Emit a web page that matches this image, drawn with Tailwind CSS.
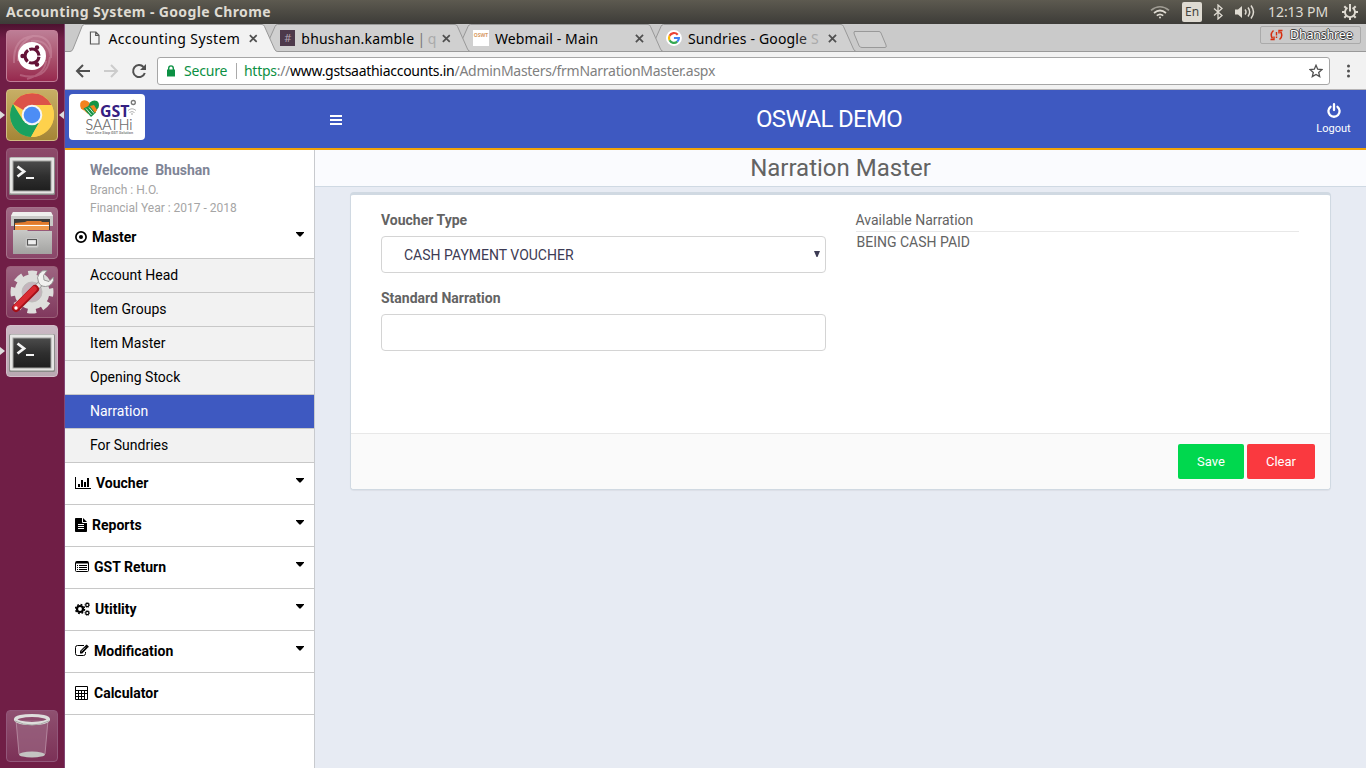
<!DOCTYPE html>
<html lang="en">
<head>
<meta charset="utf-8">
<title>Accounting System</title>
<script src="https://cdn.jsdelivr.net/npm/@tailwindcss/browser@4"></script>
</head>
<body class="w-[1366px] h-[768px] overflow-hidden flex flex-col font-['Roboto',sans-serif] text-sm bg-[#e7ebf3]">

<!-- shared symbols -->
<svg width="0" height="0" class="absolute">
  <defs>
    <linearGradient id="metal" x1="0" y1="0" x2="0" y2="1"><stop offset="0" stop-color="#c9c9c7"/><stop offset="1" stop-color="#a3a3a1"/></linearGradient>
    <linearGradient id="screen" x1="0" y1="0" x2="0" y2="1"><stop offset="0" stop-color="#4b4b4b"/><stop offset=".5" stop-color="#2f2f2f"/><stop offset="1" stop-color="#1f1f1f"/></linearGradient>
    <symbol id="caret" viewBox="0 0 8 5"><path d="M0 0h8v.8L4.6 4.5H3.4L0 .8z" fill="#000"/></symbol>
    <symbol id="close" viewBox="0 0 9 9"><path d="M.9.9l7.2 7.2M8.1.9L.9 8.1" stroke="#505050" stroke-width="1.8" fill="none"/></symbol>
    <symbol id="terminal" viewBox="0 0 52 52">
      <rect x="3" y="9" width="46" height="38" rx="1.5" fill="#8b8b89"/><rect x="4" y="9.500" width="44" height="36" rx="1" fill="#e6e6e4"/>
      <rect x="6.500" y="12.500" width="39" height="31" fill="#a2a2a0"/><rect x="7.500" y="13.500" width="37" height="29" fill="url(#screen)"/>
      <path d="M11.500 18.500l6.500 5-6.500 5" fill="none" stroke="#f4f4f4" stroke-width="2.800"/><path d="M20 30h8" stroke="#f4f4f4" stroke-width="2"/>
    </symbol>
  </defs>
</svg>

<!-- desktop panel -->
<header class="h-6 shrink-0 flex items-center justify-between pl-[6px] pr-[8px] bg-linear-to-b from-[#5d5a50] to-[#3d3c38] font-['Noto_Sans',sans-serif]">
  <div class="text-[14px] font-bold tracking-[0.36px] text-[#dfdbd2] whitespace-nowrap">Accounting System - Google Chrome</div>
  <div class="flex items-center text-[#dfdbd2]">
    <svg width="20" height="16" viewBox="0 0 20 16" fill="none" stroke="#dfdbd2" stroke-width="1.700"><path d="M1 6.300Q10-.8 19 6.300" stroke-opacity=".55"/><path d="M4 9Q10 4 16 9"/><path d="M6.800 11.700Q10 9 13.200 11.700"/><circle cx="10" cy="13.600" r="1" fill="#dfdbd2" stroke="none"/></svg>
    <div class="ml-3 w-5 h-5 rounded-[2px] bg-[#dfdbd2] text-[#45433d] text-[12px] leading-[20px] text-center">En</div>
    <svg class="ml-[11px]" width="10" height="16" viewBox="0 0 10 16" fill="none" stroke="#dfdbd2" stroke-width="1.300"><path d="M1 4.500l8 7-4 3.500V1l4 3.500-8 7"/></svg>
    <svg class="ml-[12px]" width="20" height="16" viewBox="0 0 20 16" fill="none" stroke="#dfdbd2" stroke-width="1.500"><path d="M0 5.500h3L7 2v12l-4-3.500H0z" fill="#dfdbd2" stroke="none"/><path d="M10 5.500q2 2.500 0 5M13 3.500q3.400 4.500 0 9M16 1.500q5 6.500 0 13"/></svg>
    <div class="ml-[13px] w-[62px] text-[14px] tracking-[-0.05px] whitespace-nowrap">12:13 PM</div>
    <svg class="ml-[12px]" width="16" height="16" viewBox="0 0 16 16" fill="none" stroke="#dfdbd2"><path d="M5.500 3.800a5 5 0 1 0 5 0" stroke-width="1.900"/><path d="M8 0v7.500" stroke-width="2"/><path d="M2.300 2.300l2 2M13.700 2.300l-2 2M0 8h3M16 8h-3M2.300 13.700l2-2M13.700 13.700l-2-2M8 16v-3" stroke-width="2"/></svg>
  </div>
</header>

<div class="flex-1 min-h-0 flex">

  <!-- launcher -->
  <aside class="w-[65px] shrink-0 border-r border-[#824674] bg-linear-to-b from-[#4d1230] via-[#701e46] via-[2%] to-[#701e46] flex flex-col items-start pl-[6px] pt-[6px] pb-[6px] gap-[7px]">
    <div class="w-[52px] h-[52px] rounded-[4px] border border-[#c27d97] overflow-hidden bg-linear-to-b from-[#bd7e96] to-[#97284e]">
      <svg width="50" height="50" viewBox="0 0 50 50" fill="none"><path d="M7 32Q6 7 26 5Q46 4 44 27M13 44Q40 51 43 26M26 5Q10 12 11 30M44 27Q42 8 24 10M20 48Q38 43 39 30" stroke="#dda9bb" stroke-opacity=".35" stroke-width="2"/><circle cx="25" cy="25" r="14" fill="#fff"/><circle cx="25" cy="25" r="7" stroke="#641237" stroke-width="3.200" stroke-dasharray="13.160 1.500" stroke-dashoffset="-.8"/><circle cx="15.500" cy="25" r="2.200" fill="#641237"/><circle cx="30" cy="16.500" r="2.200" fill="#641237"/><circle cx="30" cy="33.500" r="2.200" fill="#641237"/></svg>
    </div>
    <div class="relative w-[52px] h-[52px] rounded-[4px] border border-[#d1bd83] bg-linear-to-b from-[#c7ae65] to-[#a58636]">
      <svg width="50" height="50" viewBox="0 0 50 50"><circle cx="25" cy="25" r="22" fill="#fbd24b"/><path d="M25 25L6 14A22 22 0 0 1 44.500 15H25z" fill="#dc5248"/><path d="M34.200 29L24 47A22 22 0 0 1 6 14L16.500 31z" fill="#1aa15f"/><path d="M25 15h19.500A22 22 0 0 1 24 47l9.500-17z" fill="#fed14c"/><circle cx="25" cy="25" r="10.300" fill="#f5f5f5"/><circle cx="25" cy="25" r="8.300" fill="#4c8df5"/></svg>
      <svg class="absolute -left-[7px] top-[20px]" width="5" height="10" viewBox="0 0 5 10"><path d="M0 1l5 4-5 4z" fill="#ddd"/></svg>
      <svg class="absolute left-[52px] top-[20px]" width="5" height="10" viewBox="0 0 5 10"><path d="M5 1L0 5l5 4z" fill="#ddd"/></svg>
    </div>
    <div class="w-[52px] h-[52px] rounded-[4px] border border-[#955a78] bg-linear-to-b from-[#8d4a6a] to-[#7c3157]"><svg class="-m-px" width="52" height="52"><use href="#terminal"/></svg></div>
    <div class="w-[52px] h-[52px] rounded-[4px] border border-[#a5738b] bg-linear-to-b from-[#a06a85] to-[#8a4669]">
      <svg width="50" height="50" viewBox="0 0 50 50"><path d="M6 4h38l2 4v10H4V8z" fill="#c9c9c7"/><path d="M6 4h38l2 4H4z" fill="#efefed"/><path d="M7 11h36v11H7z" fill="#3c3c3a"/><path d="M8 15l10-1 2-1h14l1 1h7v8H8z" fill="#e07a2d"/><path d="M8 16.500h34V22H8z" fill="#f09a4c"/><path d="M8 17.500h34" stroke="#fff"/><path d="M6 22h14l1 1h24V46H6z" fill="url(#metal)"/><rect x="18.500" y="29.500" width="13" height="10" rx="2" fill="#d5d5d3" stroke="#bbb"/><rect x="20.500" y="31.500" width="9" height="5.500" fill="#eee" stroke="#555" stroke-width="1.200"/></svg>
    </div>
    <div class="w-[52px] h-[52px] rounded-[4px] border border-[#9b6079] bg-linear-to-b from-[#9d6581] to-[#81395e]">
      <svg width="50" height="50" viewBox="0 0 50 50" fill="none"><circle cx="25" cy="25" r="18.500" stroke="#dededc" stroke-width="6" stroke-dasharray="8.500 6.030" stroke-dashoffset="4.250"/><circle cx="25" cy="25" r="13.500" stroke="#dededc" stroke-width="8"/><circle cx="25" cy="25" r="10" fill="#c4b4bc" stroke="#bdbdbb" stroke-width="1"/><path d="M28 22l8-8" stroke="#8f8f8d" stroke-width="6"/><path d="M28 22l8-8" stroke="#e8e8e6" stroke-width="4.500"/><path d="M40 3.500A8 8 0 0 0 31.500 15Q33 19.500 38.500 19.500A8 8 0 0 0 46.500 10L42 14.500 37 13 36.500 8.500z" fill="#f2f2f0" stroke="#8f8f8d" stroke-width=".9"/><path d="M9 41L28 22" stroke="#a51018" stroke-width="8" stroke-linecap="round"/><path d="M9 40L27 22" stroke="#d92c33" stroke-width="5.500" stroke-linecap="round"/><circle cx="9" cy="41" r="1.700" fill="#fff"/></svg>
    </div>
    <div class="relative w-[52px] h-[52px] rounded-[4px] border border-[#d3bdc9] bg-linear-to-b from-[#cbb9c4] to-[#b9a8b2]"><svg class="-m-px" width="52" height="52"><use href="#terminal"/></svg>
      <svg class="absolute -left-[7px] top-[20px]" width="5" height="10" viewBox="0 0 5 10"><path d="M0 1l5 4-5 4z" fill="#ddd"/></svg>
    </div>
    <div class="mt-auto w-[52px] h-[52px] rounded-[4px] border border-[#92577a] bg-linear-to-b from-[#8f5070] to-[#7c3157]">
      <svg width="50" height="50" viewBox="0 0 50 50" fill="none"><path d="M9 9l3 34q13 6 26 0l3-34z" fill="#9a6480" fill-opacity=".7"/><path d="M9 9l3 34M41 9l-3 34" stroke="#bd93a8" stroke-width=".8"/><ellipse cx="25" cy="43.500" rx="13" ry="3" fill="#c4c4c2"/><ellipse cx="25" cy="8.500" rx="16.500" ry="4" stroke="#dededc" stroke-width="3.200"/><path d="M8 10q17 8 34 0" stroke="#a9a9a7" stroke-width="1"/></svg>
    </div>
  </aside>

  <main class="flex-1 min-w-0 flex flex-col">

    <!-- browser tabs -->
    <div class="relative h-7 shrink-0 bg-[#cacaca] flex font-['Noto_Sans',sans-serif] text-[14px] text-black">
      <svg class="absolute inset-0" width="1301" height="28" viewBox="0 0 1301 28" fill="none">
        <path d="M0 27.500H1301" stroke="#999"/>
        <g stroke="#999" fill="#d0d0d0">
          <path d="M590 16l6-13.500q.8-2 2.500-2H776q1.800 0 2.500 2l10 22.500q1 2.500 3 2.500H595z" />
          <path d="M397 16l6-13.500q.8-2 2.500-2H583q1.800 0 2.500 2l10 22.500q1 2.500 3 2.500H402z" />
          <path d="M204 16l6-13.500q.8-2 2.500-2H390q1.800 0 2.500 2l10 22.500q1 2.500 3 2.500H209z" />
          <path d="M0 28.500V27.500H5q2 0 3-2.500L17 2.500q.8-2 2.500-2H197q1.800 0 2.500 2l10 22.500q1 2.500 3 2.500V30H0z" fill="#f2f2f2"/>
          <path d="M789.500 7.500H814q1.500 0 2 1.500l5 12q1 2.500-1 2.500H797q-2 0-2.800-1.500l-5-12q-1-2.500 1-2.500z"/>
        </g>
      </svg>
      <div class="relative w-[193px] pl-6 flex items-center">
        <svg width="12" height="14" viewBox="0 0 12 14" fill="none" stroke="#5a5a5a" stroke-width="1.200"><path d="M1.500.7h5.800L10.500 4v9.300h-9zM7 .7V4.300h3.500"/></svg>
        <div class="ml-2 w-[131px] mt-px tracking-[0.38px] whitespace-nowrap">Accounting System</div>
        <svg class="ml-[10px] mt-px" width="9" height="9"><use href="#close"/></svg>
      </div>
      <div class="relative w-[193px] pl-[22px] flex items-center">
        <div class="w-4 h-4 bg-[#4d394b] text-[#b3a5b2] text-[11px] leading-4 text-center">#</div>
        <div class="ml-[6px] w-[133px] mt-px tracking-[0.2px] whitespace-nowrap">bhushan.kamble<span class="tracking-[-0.5px]"> <span class="text-[#777]">|</span> <span class="text-[#aaa]">q</span></span></div>
        <svg class="ml-[8px] mt-px" width="9" height="9"><use href="#close"/></svg>
      </div>
      <div class="relative w-[193px] pl-[22px] flex items-center">
        <div class="w-4 h-4 bg-white text-[#d79a62] text-[5px] leading-[11px] font-bold text-center">OSWT</div>
        <div class="ml-[6px] w-[133px] mt-px tracking-[0.1px] whitespace-nowrap">Webmail - Main</div>
        <svg class="ml-[8px] mt-px" width="9" height="9"><use href="#close"/></svg>
      </div>
      <div class="relative w-[193px] pl-[22px] flex items-center">
        <svg width="16" height="16" viewBox="0 0 16 16" fill="none" stroke-width="2.200"><circle cx="8" cy="8" r="8" fill="#fff"/><path d="M11.800 4.700A5 5 0 0 0 3.600 5.700" stroke="#ea4335"/><path d="M3.600 5.700a5 5 0 0 0 0 4.600" stroke="#fbbc05"/><path d="M3.600 10.300a5 5 0 0 0 7.700 1.400" stroke="#34a853"/><path d="M11.300 11.700Q13 10.200 13 8H8" stroke="#4285f4"/></svg>
        <div class="ml-[6px] w-[132px] mt-px tracking-[0.15px] whitespace-nowrap">Sundries - Googl<span class="text-[#333]">e</span> <span class="text-[#aaa]">S</span></div>
        <svg class="ml-[9px] mt-px" width="9" height="9"><use href="#close"/></svg>
      </div>
      <div class="relative ml-auto mt-[2px] mr-[5px] w-[101px] h-[18px] border border-[#aaa] rounded-[2px] flex items-center pl-[9px]">
        <svg width="13" height="12" viewBox="0 0 13 12" fill="none" stroke="#d62d0e" stroke-width="1.500"><path d="M3.500 1.500Q-.5 5 2.500 9.500M9.500 10.500Q13.500 7 10.500 2.500"/><path d="M.5 10.500h3.500V7.500M12.500 1.500H9V4.500M6.500 3v3.500M6.500 7.500v1.500" stroke-width="1.400"/></svg>
        <div class="ml-[7px] text-[12.500px] tracking-[-0.2px] leading-4 text-white whitespace-nowrap [text-shadow:1px_0_0_#444,-1px_0_0_#444,0_1px_0_#444,0_-1px_0_#444]">Dhanshree</div>
      </div>
    </div>

    <!-- address bar -->
    <div class="h-[38px] shrink-0 bg-[#f2f2f2] border-b border-[#b6b4b6] flex items-center pl-[10px] font-['Noto_Sans',sans-serif] text-[14px]">
      <svg width="16" height="14" viewBox="0 0 16 14" fill="none" stroke="#505050" stroke-width="2"><path d="M15 7H2M8 1L2 7l6 6"/></svg>
      <svg class="ml-[12px]" width="16" height="14" viewBox="0 0 16 14" fill="none" stroke="#ccc" stroke-width="2"><path d="M1 7h13M8 1l6 6-6 6"/></svg>
      <svg class="ml-[12px]" width="16" height="16" viewBox="0 0 16 16" fill="none"><path d="M12.500 4A6 6 0 1 0 13.800 10" stroke="#505050" stroke-width="2"/><path d="M15 1v6H9z" fill="#505050"/></svg>
      <div class="ml-[10px] w-[1173px] h-7 bg-white border border-[#a6a6a6] rounded-[3px] flex items-center pl-[9px] pr-[6px]">
        <svg width="8" height="12" viewBox="0 0 8 12"><path d="M0 4.500h8V11.500H0z" fill="#0b9043"/><path d="M1.700 5V3.200a2.300 2.300 0 0 1 4.600 0V5" fill="none" stroke="#0b9043" stroke-width="1.400"/></svg>
        <div class="ml-[9px] w-[43px] text-[#0b9043] tracking-[-0.2px]">Secure</div>
        <div class="ml-[9px] w-px h-4 bg-[#aaa]"></div>
        <div class="ml-[7px] whitespace-nowrap tracking-[-0.28px] text-[#808080]"><span class="text-[#0b9043]">https</span>://<span class="text-black">www.gstsaathiaccounts.in</span>/AdminMasters/frmNarrationMaster.aspx</div>
        <svg class="ml-auto" width="14" height="14" viewBox="0 0 14 14" fill="none" stroke="#505050" stroke-width="1.300"><path d="M7 1.300l1.700 3.900 4.200.4-3.200 2.800 1 4.200L7 10.400l-3.700 2.200 1-4.200L1.100 5.600l4.200-.4z"/></svg>
      </div>
      <svg class="ml-[17px]" width="4" height="14" viewBox="0 0 4 14" fill="#505050"><circle cx="1.500" cy="2" r="1.500"/><circle cx="1.500" cy="7" r="1.500"/><circle cx="1.500" cy="12" r="1.500"/></svg>
    </div>

    <!-- application header -->
    <div class="h-[60px] shrink-0 bg-[#3e59c1] border-b-2 border-[#f0a30a] flex text-white">
      <div class="w-[250px] pl-1 pt-1">
        <div class="w-[76px] h-[46px] rounded-[4px] bg-white">
          <svg width="76" height="46" viewBox="0 0 76 46" fill="none">
            <path d="M19 20L12 14.500Q9.500 8 14 6.500q4-1 6.500 2.500l2 4z" fill="#f3831f"/><path d="M19 13l2-4.500Q24 5.500 28 7q3 2 1.500 6.500L25 20z" fill="#159447"/>
            <path d="M14.500 14.500l6-3 6.500 7-5 4.500z" fill="#159447"/><path d="M21 12l4-1 3 5-2 3z" fill="#f3831f"/>
            <path d="M14.500 16l5.500 6M17 14.500l5.500 6.500M20 13.500l5 6" stroke="#fff" stroke-width=".8"/>
            <text x="31" y="22.500" font-family="Open Sans, sans-serif" font-weight="700" font-size="15.500" textLength="29.500" lengthAdjust="spacingAndGlyphs" fill="#352082">GST</text>
            <circle cx="64.300" cy="8.500" r="2" stroke="#777" stroke-width="1.300"/>
            <path d="M59 16.500q4-3.500 8 0M60.500 18.500q2.500-2 5 0" stroke="#aaa" stroke-width=".9"/><circle cx="63" cy="20" r=".8" fill="#999"/>
            <text x="16.500" y="35.500" font-family="Lato, sans-serif" font-weight="300" font-size="16.500" textLength="47" lengthAdjust="spacingAndGlyphs" fill="#555" stroke="#777" stroke-width=".2">SAATHi</text>
            <text x="17" y="40" font-family="Roboto, sans-serif" font-weight="700" font-size="3.500" textLength="47" lengthAdjust="spacingAndGlyphs" fill="#888">Your One Stop GST Solution</text>
          </svg>
        </div>
      </div>
      <div class="w-[30px] pl-[15px] pt-[25px]">
        <svg width="12" height="10" viewBox="0 0 12 10" fill="#fff"><path d="M0 0h12v2H0zM0 4h12v2H0zM0 8h12v2H0z"/></svg>
      </div>
      <div class="flex-1 pt-px pl-[12px] text-center text-2xl leading-[56px] tracking-[-0.7px]">OSWAL DEMO</div>
      <div class="w-[65px] flex flex-col items-center pt-[13px] text-[11px] leading-4">
        <svg width="14" height="15" viewBox="0 0 14 15" fill="none" stroke="#fff" stroke-width="2.300" stroke-linecap="round"><path d="M3.500 3.800A5.600 5.600 0 1 0 10.500 3.800M7 1.200V7"/></svg>
        <div class="mt-[3px]">Logout</div>
      </div>
    </div>

    <div class="flex-1 min-h-0 flex">
      <!-- navigation -->
      <nav class="w-[250px] shrink-0 bg-white border-r border-[#c8cace] text-black">
        <div class="h-[66px] pl-[25px] pt-[11px] text-xs leading-[18px] text-[#a5a5a5]">
          <div class="text-sm leading-[19px] mb-px font-bold text-[#7f8596]">Welcome &nbsp;Bhushan</div>
          <div>Branch : H.O.</div>
          <div>Financial Year : 2017 - 2018</div>
        </div>
        <div class="h-[43px] border-b border-[#c8c8c8] flex items-start pl-[10px] pr-[10px] pt-[11px] font-bold leading-5">
          <svg class="mt-[4px] mr-[5px]" width="12" height="12" viewBox="0 0 12 12"><circle cx="6" cy="6" r="5.100" fill="none" stroke="#000" stroke-width="1.700"/><circle cx="6" cy="6" r="2" fill="#000"/></svg>
          Master<svg class="ml-auto mt-[5px]" width="8" height="5"><use href="#caret"/></svg>
        </div>
        <ul class="bg-[#f2f2f2] leading-[33px]">
          <li class="h-[34px] pl-[25px] border-b border-[#c8c8c8]">Account Head</li>
          <li class="h-[34px] pl-[25px] border-b border-[#c8c8c8]">Item Groups</li>
          <li class="h-[34px] pl-[25px] border-b border-[#c8c8c8]">Item Master</li>
          <li class="h-[34px] pl-[25px] border-b border-[#c8c8c8]">Opening Stock</li>
          <li class="h-[34px] pl-[25px] border-b border-[#c8c8c8] bg-[#3e59c1] text-white">Narration</li>
          <li class="h-[34px] pl-[25px] border-b border-[#c8c8c8]">For Sundries</li>
        </ul>
        <ul class="font-bold leading-5">
          <li class="h-[42px] border-b border-[#c8c8c8] flex items-start px-[10px] pt-[10px]"><svg class="mt-[3px] mr-[5px]" width="16" height="14" viewBox="0 0 16 14"><path d="M0 1h1v11h15v1H0zM3 8h2v3H3zM6 4h2v7H6zM9 6h2v5H9zM12 2h2v9h-2z"/></svg>Voucher<svg class="ml-auto mt-[5px]" width="8" height="5"><use href="#caret"/></svg></li>
          <li class="h-[42px] border-b border-[#c8c8c8] flex items-start px-[10px] pt-[10px]"><svg class="mt-[3px] mr-[5px]" width="12" height="14" viewBox="0 0 12 14"><path d="M0 .8Q0 0 .8 0H7v4q0 1 1 1h4v8.200q0 .8-.8.800H.8Q0 14 0 13.200zM8 0l4 4H8z"/><path d="M3 6.500h6M3 8.500h6M3 10.500h6" stroke="#fff"/></svg>Reports<svg class="ml-auto mt-[5px]" width="8" height="5"><use href="#caret"/></svg></li>
          <li class="h-[42px] border-b border-[#c8c8c8] flex items-start px-[10px] pt-[10px]"><svg class="mt-[4px] mr-[5px]" width="14" height="12" viewBox="0 0 14 12" fill="none" stroke="#000"><rect x=".5" y=".5" width="13" height="10" rx="1"/><path d="M1 1.500h12" stroke-width="2"/><path d="M2 4.500h1M4 4.500h8M2 6.500h1M4 6.500h8M2 8.500h1M4 8.500h8"/></svg>GST Return<svg class="ml-auto mt-[5px]" width="8" height="5"><use href="#caret"/></svg></li>
          <li class="h-[42px] border-b border-[#c8c8c8] flex items-start px-[10px] pt-[10px]"><svg class="mt-[3px] mr-[5px]" width="15" height="14" viewBox="0 0 15 14" fill="none" stroke="#000"><circle cx="5" cy="7" r="3" stroke-width="2.200"/><circle cx="5" cy="7" r="4.500" stroke-width="1.500" stroke-dasharray="1.770 1.770"/><circle cx="12.300" cy="3" r="1.600" stroke-width="1.200"/><circle cx="12.300" cy="3" r="2.500" stroke-width=".7" stroke-dasharray="1 .96"/><circle cx="12.300" cy="11" r="1.600" stroke-width="1.200"/><circle cx="12.300" cy="11" r="2.500" stroke-width=".7" stroke-dasharray="1 .96"/></svg>Utitlity<svg class="ml-auto mt-[5px]" width="8" height="5"><use href="#caret"/></svg></li>
          <li class="h-[42px] border-b border-[#c8c8c8] flex items-start px-[10px] pt-[10px]"><svg class="mt-[3px] mr-[5px]" width="14" height="13" viewBox="0 0 14 13" fill="none" stroke="#000"><path d="M9 1.500H2.500q-2 0-2 2v6q0 2 2 2h6q2 0 2-2V8"/><path d="M5 9.500V7L10.800 1.200 13 3.400 7.200 9.500z" fill="#000" stroke="none"/><path d="M6.300 7.500l4-4" stroke="#fff" stroke-width=".7"/><path d="M11.200 1l2.200 2.200" stroke-width="1.400"/></svg>Modification<svg class="ml-auto mt-[5px]" width="8" height="5"><use href="#caret"/></svg></li>
          <li class="h-[42px] border-b border-[#c8c8c8] flex items-start px-[10px] pt-[10px]"><svg class="mt-[3px] mr-[6px]" width="13" height="14" viewBox="0 0 13 14"><rect width="13" height="14" rx="1"/><path d="M1 1h11v3H1zM1 5h2v2H1zM4 5h2v2H4zM7 5h2v2H7zM10 5h2v2h-2zM1 8h2v2H1zM4 8h2v2H4zM7 8h2v2H7zM1 11h2v2H1zM4 11h2v2H4zM7 11h2v2H7zM10 8h2v5h-2z" fill="#fff"/></svg>Calculator</li>
        </ul>
      </nav>

      <!-- content -->
      <section class="flex-1 min-w-0 text-[#636363]">
        <h1 class="h-[37px] bg-[#fafbfe] border-b border-[#cfd9e3] text-2xl leading-[36px] text-center">Narration Master</h1>
        <div class="mt-[5px] ml-[35px] w-[981px] h-[298px] flex flex-col bg-white border border-t-[3px] border-[#d0d9e2] rounded-[4px] shadow-[0_1px_1px_rgba(0,0,0,0.05)]">
          <div class="flex-1 flex pl-[30px] pt-[15px]">
            <div class="w-[445px]">
              <div class="font-bold leading-5">Voucher Type</div>
              <div class="mt-[6px] h-[37px] border border-[#d4d4d4] rounded-[4px] flex items-center pl-[22px] pr-[5px] text-[#3d3b54]">CASH PAYMENT VOUCHER<svg class="ml-auto -mt-[2px]" width="6" height="6" viewBox="0 0 6 6"><path d="M0 0h6L3.500 6h-1z" fill="#3d3b54"/></svg></div>
              <div class="mt-[15px] font-bold leading-5">Standard Narration</div>
              <div class="mt-[6px] h-[37px] border border-[#d4d4d4] rounded-[4px]"></div>
            </div>
            <div class="ml-[29.500px] w-[443px]">
              <div class="h-[22px] leading-5 border-b border-[#e8e8e8]">Available Narration</div>
              <div class="pl-px leading-5">BEING CASH PAID</div>
            </div>
          </div>
          <div class="h-[56px] bg-[#fafafa] border-t border-[#e8e8e8] rounded-b-[3px] flex justify-end gap-[3px] pt-[10px] pr-[15px] text-[13px] leading-[35px] text-center text-white">
            <div class="w-[66px] h-[35px] rounded-[2px] bg-[#00d84e]">Save</div>
            <div class="w-[68px] h-[35px] rounded-[2px] bg-[#fa393f]">Clear</div>
          </div>
        </div>
      </section>
    </div>
  </main>
</div>
</body>
</html>
